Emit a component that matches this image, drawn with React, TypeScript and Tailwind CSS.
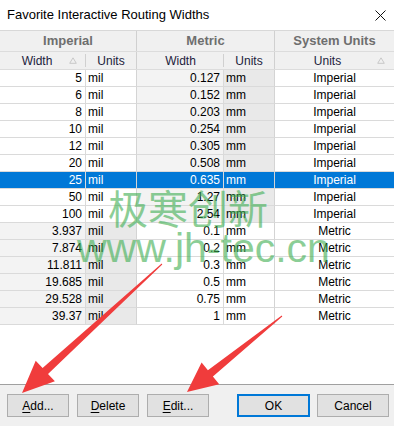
import React from "react";

type Row = { imp: string; met: string; sys: "Imperial" | "Metric" };

const rows: Row[] = [
  { imp: "5", met: "0.127", sys: "Imperial" },
  { imp: "6", met: "0.152", sys: "Imperial" },
  { imp: "8", met: "0.203", sys: "Imperial" },
  { imp: "10", met: "0.254", sys: "Imperial" },
  { imp: "12", met: "0.305", sys: "Imperial" },
  { imp: "20", met: "0.508", sys: "Imperial" },
  { imp: "25", met: "0.635", sys: "Imperial" },
  { imp: "50", met: "1.27", sys: "Imperial" },
  { imp: "100", met: "2.54", sys: "Imperial" },
  { imp: "3.937", met: "0.1", sys: "Metric" },
  { imp: "7.874", met: "0.2", sys: "Metric" },
  { imp: "11.811", met: "0.3", sys: "Metric" },
  { imp: "19.685", met: "0.5", sys: "Metric" },
  { imp: "29.528", met: "0.75", sys: "Metric" },
  { imp: "39.37", met: "1", sys: "Metric" },
];

const SELECTED = 6;

function SortMark() {
  return (
    <svg width="8" height="7" viewBox="0 0 8 7" className="absolute right-[9px] top-[5px]">
      <path d="M4 0.8 L7.3 6.3 L0.7 6.3 Z" fill="none" stroke="#c8c8c8" strokeWidth="1" />
    </svg>
  );
}

function Button({ label, u, rest, primary, className }: { label?: string; u: string; rest: string; primary?: boolean; className: string }) {
  return (
    <button
      className={
        "h-[23px] bg-[#e1e1e1] text-[12px] text-black flex items-center justify-center " +
        (primary ? "border-2 border-[#0078d7] " : "border border-[#adadad] ") +
        className
      }
    >
      {label ? label : (
        <span>
          <span className="underline underline-offset-2">{u}</span>
          {rest}
        </span>
      )}
    </button>
  );
}

export default function App() {
  return (
    <div className="relative w-[394px] h-[426px] bg-white overflow-hidden font-['Liberation_Sans',Arial,sans-serif] text-[12px] text-black flex flex-col">
      {/* title bar */}
      <div className="h-[30px] flex items-center justify-between pl-[7px] pr-[8px] shrink-0">
        <span className="text-[13px] text-black">Favorite Interactive Routing Widths</span>
        <svg width="11" height="11" viewBox="0 0 11 11">
          <path d="M0.5 0.5 L10.5 10.5 M10.5 0.5 L0.5 10.5" stroke="#111" strokeWidth="1" />
        </svg>
      </div>

      {/* grid */}
      <div className="flex-1 flex flex-col border-t border-[#d8d8d8]">
        <div className="flex h-[21px] bg-[#f0f0f0] border-b border-[#dcdcdc] text-[13px] font-bold text-[#6e6e6e]">
          <div className="w-[137px] border-r border-[#d0d0d0] flex items-center justify-center">Imperial</div>
          <div className="w-[138px] border-r border-[#d0d0d0] flex items-center justify-center">Metric</div>
          <div className="flex-1 flex items-center justify-center">System Units</div>
        </div>
        <div className="flex h-[18px] bg-[#f0f0f0] border-b border-[#dcdcdc] text-[#1c1c3c]">
          <div className="relative w-[86px] flex items-center justify-center pr-[12px]">
            Width
            <SortMark />
            <div className="absolute right-0 top-[2px] h-[13px] w-px bg-[#d0d0d0]" />
          </div>
          <div className="w-[51px] border-r border-[#d0d0d0] flex items-center justify-center">Units</div>
          <div className="relative w-[87px] flex items-center justify-center">
            Width
            <div className="absolute right-0 top-[2px] h-[13px] w-px bg-[#d0d0d0]" />
          </div>
          <div className="w-[51px] border-r border-[#d0d0d0] flex items-center justify-center">Units</div>
          <div className="relative flex-1 flex items-center justify-center pr-[14px]">
            Units
            <SortMark />
          </div>
        </div>

        {rows.map((r, i) => {
          const sel = i === SELECTED;
          const metric = r.sys === "Metric";
          const cell = "h-[17px] border-b border-[#dadada] flex items-center ";
          return (
            <div key={i} className={"flex " + (sel ? "bg-[#0078d7] text-white" : "")}>
              <div className={cell + "w-[86px] justify-end pr-[3px] border-r border-r-[#dadada] " + (!sel && metric ? "bg-[#f3f3f3]" : "")}>{r.imp}</div>
              <div className={cell + "w-[51px] pl-[2px] border-r border-r-[#d4d4d4] " + (!sel && metric ? "bg-[#e9e9e9]" : "")}>mil</div>
              <div className={cell + "w-[87px] justify-end pr-[3px] border-r border-r-[#dadada] " + (!sel && !metric ? "bg-[#f3f3f3]" : "")}>{r.met}</div>
              <div className={cell + "w-[51px] pl-[2px] border-r border-r-[#d4d4d4] " + (!sel && !metric ? "bg-[#e9e9e9]" : "")}>mm</div>
              <div className={cell + "flex-1 justify-center"}>{r.sys}</div>
            </div>
          );
        })}
      </div>

      {/* button panel */}
      <div className="h-[42px] shrink-0 bg-[#f0f0f0] border-t border-[#a0a0a0] flex items-start pt-[9px] pl-[7px]">
        <Button u="A" rest="dd..." className="w-[62px]" />
        <Button u="D" rest="elete" className="w-[62px] ml-[8px]" />
        <Button u="E" rest="dit..." className="w-[62px] ml-[8px]" />
        <Button label="OK" u="" rest="" primary className="w-[73px] ml-[28px]" />
        <Button label="Cancel" u="" rest="" className="w-[72px] ml-[7px]" />
      </div>

      {/* watermark */}
      <div className="pointer-events-none absolute left-[108px] top-[187px] text-[40px] leading-none text-[#3fae52] opacity-60 font-['Noto_Sans_CJK_SC',sans-serif]">
        极寒创新
      </div>
      <div className="pointer-events-none absolute left-[77px] top-[228px] text-[41px] leading-none text-[#3fae52] opacity-60 font-['Liberation_Sans',Arial,sans-serif]">
        www.jh-tec.cn
      </div>

      {/* arrows */}
      <svg className="pointer-events-none absolute left-0 top-0" width="394" height="426" viewBox="0 0 394 426">
        <polygon
          fill="#f03c3c"
          points="162.3,264.4 48,373.9 54.9,381.2 22,393 35.7,360.8 42.6,368.1 161.7,263.6"
        />
        <polygon
          fill="#f03c3c"
          points="282.3,316.4 212.9,376.4 219.2,384.2 187,392 201.6,362.4 207.9,370.2 281.7,315.6"
        />
      </svg>
    </div>
  );
}
